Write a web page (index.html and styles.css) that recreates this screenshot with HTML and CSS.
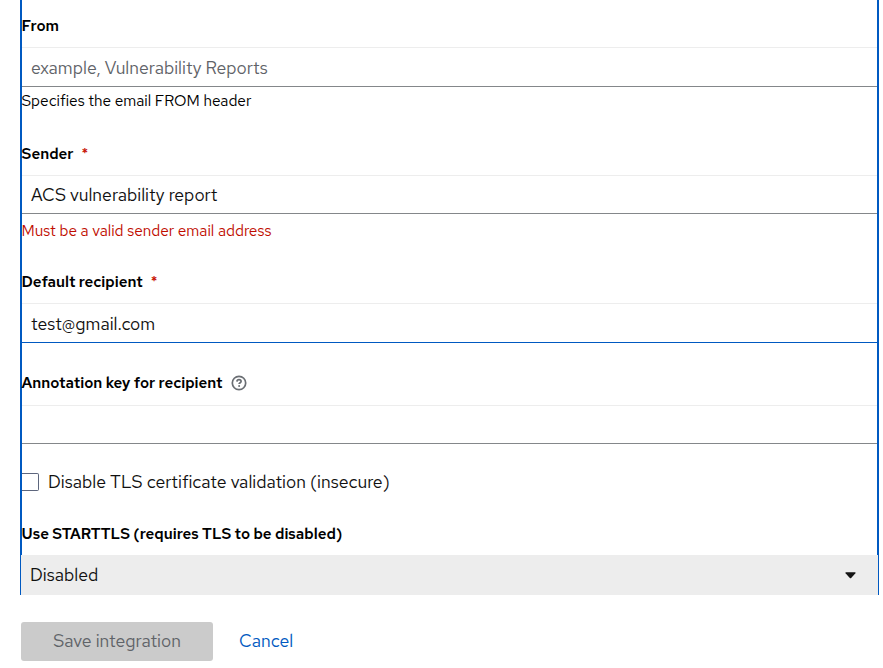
FILE: index.html
```html
<!DOCTYPE html>
<html lang="en">
<head>
<meta charset="utf-8">
<title>Email integration</title>
<link rel="stylesheet" href="styles.css">
</head>
<body>
<form class="form">
  <div class="fields">
    <div class="group group-from">
      <div class="label"><span>From</span></div>
      <div class="control placeholder"><span>example, Vulnerability Reports</span></div>
      <div class="helper">Specifies the email FROM header</div>
    </div>
    <div class="group group-sender">
      <div class="label"><span>Sender</span><span class="required">*</span></div>
      <div class="control short"><span>ACS vulnerability report</span></div>
      <div class="helper error">Must be a valid sender email address</div>
    </div>
    <div class="group group-recipient">
      <div class="label"><span>Default recipient</span><span class="required">*</span></div>
      <div class="control active"><span>test@gmail.com</span></div>
    </div>
    <div class="group group-annotation">
      <div class="label"><span>Annotation key for recipient</span>
        <svg class="help" viewBox="0 0 16 16" width="16" height="16" fill="none" stroke="#6a6e73"><circle cx="8" cy="8" r="6.7" stroke-width="1.7"/><path d="M5.9 6.6C6 5.3 6.9 4.7 8 4.7c1.2 0 2.1.7 2.1 1.7C10.1 7.7 8.1 7.7 8.1 9.1" stroke-width="1.7"/><circle cx="8.1" cy="11.1" r="1" fill="#6a6e73" stroke="none"/></svg>
      </div>
      <div class="control short"></div>
    </div>
    <div class="check"><span class="box"></span><span>Disable TLS certificate validation (insecure)</span></div>
    <div class="label"><span>Use STARTTLS (requires TLS to be disabled)</span></div>
  </div>
  <div class="select"><span>Disabled</span>
    <svg class="caret" viewBox="0 0 11 7" width="11" height="7"><path d="M.8.3h9.4q.7.3.2.9L6.2 6q-.7.7-1.4 0L.6 1.2Q.1.6.8.3Z" fill="#151515"/></svg>
  </div>
  <div class="actions">
    <button class="save" type="button" disabled>Save integration</button>
    <a class="cancel">Cancel</a>
  </div>
</form>
</body>
</html>
```
FILE: styles.css
```css
* { box-sizing: border-box; }
body {
  margin: 0;
  height: 668px;
  overflow: hidden;
  background: #fff;
  color: #101010;
  font: 17.6px/24px "Red Hat Text", "Noto Sans", sans-serif;
  white-space: nowrap;
}
.form { width: 859px; margin-left: 20px; }
.fields {
  height: 555px;
  padding-top: 14px;
  border: solid #0059c1;
  border-width: 0 2px;
}
.label {
  display: flex;
  align-items: center;
  height: 24px;
  margin-left: -0.5px;
  color: #000;
  font-size: 15.2px;
  font-weight: 600;
}
.required { margin: -2px 0 0 8px; color: #c9190b; font-size: 14px; }
.help { margin-left: 8px; }
.control {
  display: flex;
  align-items: center;
  height: 40px;
  margin-top: 9px;
  padding: 1px 9px 0;
  border-top: 1px solid #ededed;
  border-bottom: 1px solid #84878a;
}
.short { height: 39px; }
.active { border-bottom-color: #0059c1; }
.placeholder { color: #5f6368; }
.helper { height: 24px; margin: 2px 0 0 -0.5px; color: #000; font-size: 15.4px; }
.error { margin-top: 5px; color: #c00d00; }
.group-from { height: 128px; }
.group-sender { height: 128px; }
.group-recipient { height: 101px; }
.group-annotation { height: 99px; }
.group-annotation .control { margin-top: 10px; }
.check { display: flex; align-items: center; height: 24px; margin-bottom: 28px; }
.box { width: 17px; height: 18px; margin-right: 9px; border: 1px solid #5d667d; border-left: 0; border-radius: 0 2px 2px 0; }
.select {
  display: flex;
  align-items: center;
  justify-content: space-between;
  height: 40px;
  padding: 0 22px 0 9px;
  border: solid #0059c1;
  border-width: 0 1px;
  background: #ededed;
}
.actions { display: flex; align-items: center; margin: 27px 0 0 1px; }
.save {
  width: 192px;
  height: 39px;
  padding: 0 0 2px;
  border: 0;
  border-radius: 3px;
  background: #cbcbcb;
  color: #5f6368;
  font: inherit;
}
.cancel { margin: -2px 0 0 26px; color: #0059c1; }
```
